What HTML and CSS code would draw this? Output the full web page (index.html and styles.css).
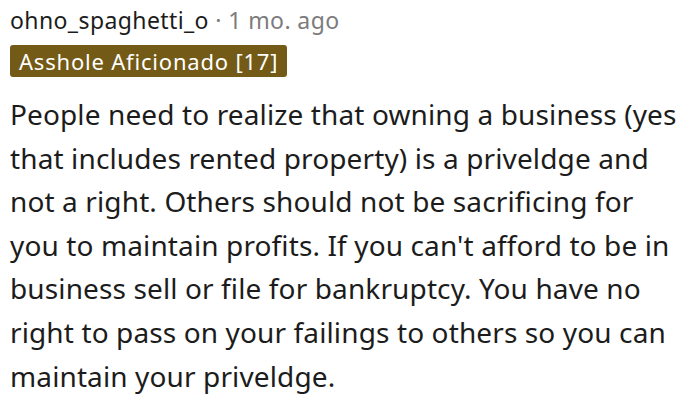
FILE: index.html
```html
<!DOCTYPE html>
<html>
<head>
<meta charset="utf-8">
<link rel="stylesheet" href="styles.css">
</head>
<body>
<div class="comment">
  <div class="meta">
    <span class="author">ohno_spaghetti_o</span><span class="dot"> · </span><span class="time">1 mo. ago</span>
  </div>
  <div class="flair-row"><span class="flair">Asshole Aficionado [17]</span></div>
  <p class="body-text">People need to realize that owning a business (yes that includes rented property) is a priveldge and not a right. Others should not be sacrificing for you to maintain profits. If you can't afford to be in business sell or file for bankruptcy. You have no right to pass on your failings to others so you can maintain your priveldge.</p>
</div>
</body>
</html>
```
FILE: styles.css
```css
html, body {
  margin: 0;
  padding: 0;
  background: #ffffff;
}
.comment {
  padding: 6px 10px 0 10px;
  font-family: "Noto Sans", "Open Sans", sans-serif;
}
.meta {
  font-size: 23px;
  line-height: 28px;
  letter-spacing: 0.4px;
  color: #1c1c1c;
}
.dot, .time {
  color: #7c7c7c;
}
.flair-row {
  margin-top: 11px;
  display: flex;
}
.flair {
  background: #735a16;
  color: #ffffff;
  font-size: 22px;
  line-height: 32px;
  letter-spacing: 0.8px;
  padding: 0 9px;
  border-radius: 3px;
}
.body-text {
  margin: 16px 0 0 0;
  font-size: 28px;
  line-height: 43.6px;
  letter-spacing: 0.12px;
  color: #1c1c1c;
  width: 678px;
}
```
